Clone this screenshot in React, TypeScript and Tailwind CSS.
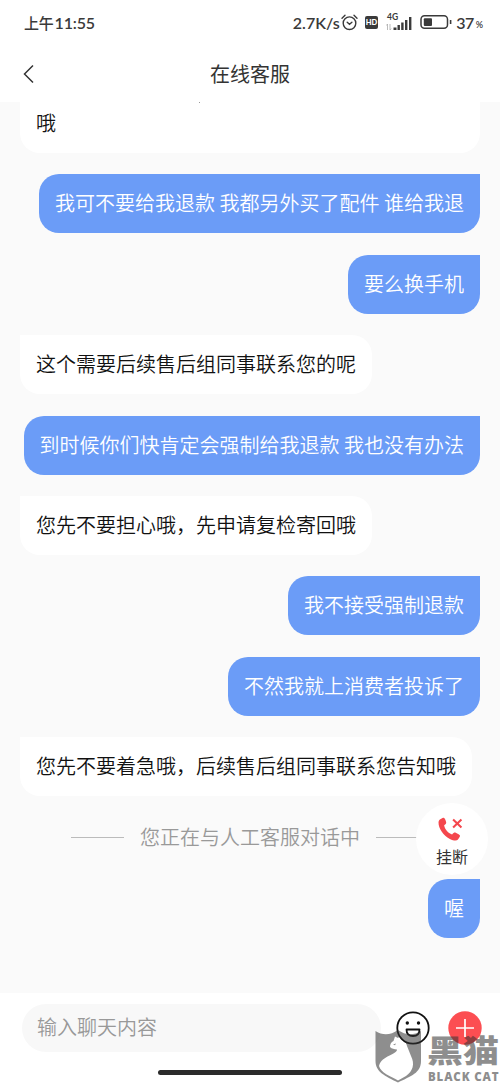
import React from "react";
import clsx from "clsx";

interface Message {
  text: string;
  mine?: boolean;
}

const messages: Message[] = [
  { text: "我可不要给我退款 我都另外买了配件 谁给我退", mine: true },
  { text: "要么换手机", mine: true },
  { text: "这个需要后续售后组同事联系您的呢" },
  { text: "到时候你们快肯定会强制给我退款 我也没有办法", mine: true },
  { text: "您先不要担心哦，先申请复检寄回哦" },
  { text: "我不接受强制退款", mine: true },
  { text: "不然我就上消费者投诉了", mine: true },
  { text: "您先不要着急哦，后续售后组同事联系您告知哦" },
];

function Bubble({ text, mine }: Message) {
  return (
    <div
      className={clsx(
        "h-[59px] px-4 pb-px flex items-center whitespace-nowrap text-[20px] font-[350]",
        mine
          ? "self-end bg-[#6b9cf7] text-white rounded-[20px] rounded-tr-none"
          : "self-start bg-white text-[#111] rounded-[20px] rounded-tl-none"
      )}
    >
      {text}
    </div>
  );
}

function StatusBar() {
  return (
    <div className="h-[46px] pl-6 pr-[17px] pb-px flex items-center justify-between text-[#3a3a3a] font-medium">
      <div className="flex items-center leading-none font-medium">
        <span className="text-[15px] tracking-[-0.2px]">上午</span>
        <span className="ml-px text-[16px] tracking-[-0.2px] font-['Lato',sans-serif] font-semibold">11:55</span>
      </div>
      <div className="flex items-center font-['Lato',sans-serif] font-semibold leading-none">
        <span className="text-[16px] w-[45px] whitespace-nowrap">2.7K/s</span>
        <svg className="ml-[3px]" width="17" height="17" viewBox="0 0 17 17" fill="none" stroke="currentColor" strokeWidth="1.4" strokeLinecap="round">
          <circle cx="8.5" cy="9.2" r="6.3" />
          <path d="M1 4.2 4 1.2M16 4.2l-3-3M6.2 8.3l2.3 2 2.4-2" />
        </svg>
        <div className="ml-[7px] w-[13.5px] h-[13px] rounded-[2px] bg-[#3a3a3a] text-white text-[7.5px] font-black flex items-center justify-center">
          HD
        </div>
        <svg className="ml-[8px] -mt-[2px]" width="27" height="18" viewBox="0 0 27 18" fill="currentColor">
          <text x="1" y="7" fontSize="8.5" fontWeight="700">4G</text>
          <path d="M7.5 14.5h3V17h-3zM11.5 12h2.4v5h-2.4zM15.2 9.5h2.4V17h-2.4zM19 7h2.4v10H19zM23 4h2.4v13H23z" />
          <path d="M1.5 17v-6L.3 12.5M4 11v6l1.2-1.5" fill="none" stroke="#aaa" strokeWidth=".8" />
        </svg>
        <svg className="ml-[7px] -mt-px" width="32" height="16" viewBox="0 0 32 16" fill="none">
          <rect x="1" y="1.7" width="26.5" height="12.6" rx="3.5" stroke="currentColor" strokeWidth="1.5" />
          <rect x="3.8" y="4.3" width="8.2" height="7.6" rx="1" fill="currentColor" />
          <path d="M30.6 6v4" stroke="currentColor" strokeWidth="1.6" />
        </svg>
        <span className="ml-[4px] text-[16px] tracking-[-0.6px]">37</span>
        <span className="ml-[2px] mt-[4px] text-[9px]">%</span>
      </div>
    </div>
  );
}

function Watermark() {
  return (
    <div className="absolute left-[375px] top-[1030px] flex opacity-55 text-[#333] pointer-events-none">
      <svg width="46" height="53" viewBox="0 0 46 53" fill="currentColor">
        <path
          fillRule="evenodd"
          d="M.5 1C8 6 16 5 23 0 30 5 38 6 46 1V31C46 43 36 46 23 52.5 10 46 .5 42 .5 31ZM20 6.5 18.5 11C16 12 15 14.5 15 17 17 19 19 19 22 19.5 22 25 7 25 4 36 6 43 15 46 23 50.5L31 46C38 41 40 34 36 26L32 16C31 12 29 9 25.5 8.5L24.5 6.5 23 8Z"
        />
        <path d="m18 14.5 3-1-1 1.8z" />
      </svg>
      <div className="ml-[6px] flex flex-col">
        <div className="mt-[3px] h-[36px] origin-top scale-y-[0.85] text-[36px] leading-[36px] font-black whitespace-nowrap">
          黑猫
        </div>
        <div className="ml-px mt-[3px] h-[10px] font-['Open_Sans',sans-serif] font-extrabold text-[11.5px] leading-[10px] tracking-[0.85px] whitespace-nowrap">
          BLACK CAT
        </div>
      </div>
    </div>
  );
}

export default function App() {
  return (
    <div className="relative w-[500px] h-[1083px] overflow-hidden flex flex-col bg-white font-['Noto_Sans_CJK_SC',sans-serif]">
      <StatusBar />
      <header className="h-[56px] shrink-0 px-[22px] pb-px grid grid-cols-[1fr_auto_1fr] items-center text-[#333]">
        <svg width="14" height="20" viewBox="0 0 14 20" fill="none" stroke="currentColor" strokeWidth="1.5">
          <path d="M11 1.5 2.5 10l8.5 8.5" />
        </svg>
        <h1 className="text-[20px] font-normal">在线客服</h1>
      </header>

      <main className="h-[891px] shrink-0 px-5 bg-[#fafafa] flex flex-col gap-[21.4px] overflow-hidden">
        <div className="relative h-[51px] shrink-0 px-4 pt-[6px] bg-white rounded-b-[20px] text-[20px] leading-[30px] font-[350] text-[#111]">
          哦
          {/* tail of the line scrolled under the header */}
          <span className="absolute left-[179px] top-0 size-px bg-[#999]" />
        </div>
        {messages.map((item, index) => (
          <Bubble key={index} text={item.text} mine={item.mine} />
        ))}
        <div className="h-[40px] shrink-0 pl-[51px] flex items-center gap-4 text-[20px] font-[350] text-[#999] whitespace-nowrap">
          <span className="w-[53px] h-px bg-[#bbb]" />
          <span className="-mt-[2px]">您正在与人工客服对话中</span>
          <span className="w-[53px] h-px bg-[#bbb]" />
        </div>
        <Bubble text="喔" mine />
      </main>

      <footer className="h-[90px] shrink-0 flex flex-col justify-between pt-[11px] pb-[8px]">
        <div className="flex items-center pl-[22px]">
          <div className="w-[359px] h-[48px] rounded-full bg-[#f8f8f8] pl-[15px] pb-[2px] flex items-center text-[20px] font-[350] text-[#999]">
            输入聊天内容
          </div>
          <svg className="ml-[15px]" width="34" height="34" viewBox="0 0 34 34" fill="none" stroke="#111" strokeWidth="1.8">
            <circle cx="17" cy="17" r="15.7" />
            <path d="M10.5 18.5h13c0 4.5-3 6.5-6.5 6.5s-6.5-2-6.5-6.5z" strokeLinejoin="round" />
            <circle cx="11.3" cy="12" r="1.7" fill="#111" stroke="none" />
            <circle cx="22.5" cy="12" r="1.7" fill="#111" stroke="none" />
          </svg>
          <svg className="ml-[18px]" width="34" height="34" viewBox="0 0 34 34">
            <circle cx="17" cy="17" r="16.7" fill="#fc4e52" />
            <path d="M17 8v18M8 17h18" stroke="#fff" strokeWidth="1.7" />
          </svg>
        </div>
        <div className="self-center w-[184px] h-[5px] rounded-full bg-[#2b2b2b]" />
      </footer>

      {/* hang up button floats over the chat */}
      <button className="absolute left-[416px] top-[803px] size-[72px] rounded-full bg-white flex flex-col items-center pt-[14px] text-[#333]">
        <svg className="-ml-[3px]" width="25" height="25" viewBox="0 0 24 24" fill="#f4474d">
          <path d="M2.2 2.2 4.8.8C6 .4 6.8 1.6 7.8 4.8c.3 1.4-.3 1.9-1.9 3.2.6 3.9 3.6 7.5 7.6 8.800 1.7-1.8 2.3-2.2 3.6-1.600 3.7 1.8 4.5 2.5 3.8 3.8l-1.7 2.6c-1.2 1.5-4.2 1.2-7.8-.6C5 17.6.4 11 .5 5.3c0-1.5.7-2.5 1.7-3.1z" />
          <path d="m14.5 2.5 8 7.5m0-7.5-8 7.5" stroke="#f4474d" strokeWidth="2" />
        </svg>
        <span className="mt-[3px] text-[16px] leading-[22px]">挂断</span>
      </button>

      <Watermark />
    </div>
  );
}
